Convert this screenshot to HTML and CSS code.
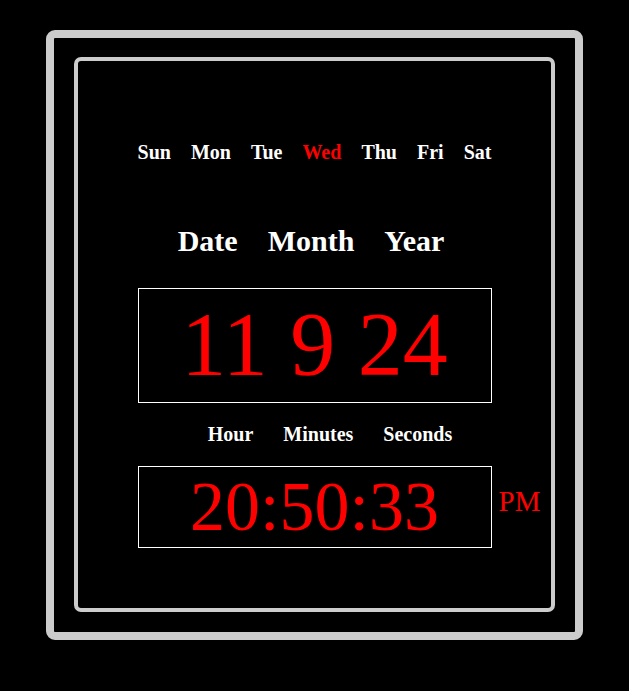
FILE: index.html
```html
<!DOCTYPE html>
<html>
<head>
<meta charset="utf-8">
<link rel="stylesheet" href="styles.css">
</head>
<body>
<div class="outer">
  <div class="inner">
    <div class="days">
      <span>Sun</span><span>Mon</span><span>Tue</span><span class="today">Wed</span><span>Thu</span><span>Fri</span><span>Sat</span>
    </div>
    <div class="date-labels">
      <span>Date</span><span>Month</span><span>Year</span>
    </div>
    <div class="date-box">11 9 24</div>
    <div class="time-labels">
      <span>Hour</span><span>Minutes</span><span>Seconds</span>
    </div>
    <div class="time-row">
      <div class="time-box">20:50:33</div>
      <div class="ampm">PM</div>
    </div>
  </div>
</div>
</body>
</html>
```

FILE: styles.css
```css
html, body {
  margin: 0;
  padding: 0;
  background: #000;
}
body {
  font-family: "Liberation Serif", "Times New Roman", serif;
  color: #fff;
  padding-top: 30px;
}
.outer {
  box-sizing: border-box;
  width: 537px;
  height: 610px;
  margin: 0 auto;
  border: 8px solid #cccccc;
  border-radius: 9px;
  padding: 19px 20px 20px 20px;
}
.inner {
  box-sizing: border-box;
  height: 555px;
  border: 4px solid #cccccc;
  border-radius: 7px;
  display: flex;
  flex-direction: column;
  align-items: center;
}
.days {
  margin-top: 80px;
  display: flex;
  gap: 20px;
  font-size: 20px;
  font-weight: bold;
  line-height: 23px;
}
.today {
  color: #ff0000;
}
.date-labels {
  margin-top: 60px;
  display: flex;
  gap: 30px;
  font-size: 30px;
  font-weight: bold;
  line-height: 34px;
  margin-left: -7px;
}
.date-box {
  margin-top: 30px;
  box-sizing: border-box;
  width: 354px;
  height: 115px;
  border: 1px solid #fff;
  color: #ff0000;
  font-size: 90px;
  line-height: 112px;
  text-align: center;
}
.time-labels {
  margin-top: 20px;
  display: flex;
  gap: 30px;
  font-size: 20px;
  font-weight: bold;
  line-height: 23px;
  margin-left: 31px;
}
.time-row {
  margin-top: 20px;
  width: 100%;
  display: grid;
  grid-template-columns: 1fr 354px 1fr;
  align-items: center;
}
.time-box {
  grid-column: 2;
  box-sizing: border-box;
  height: 82px;
  border: 1px solid #fff;
  color: #ff0000;
  font-size: 70px;
  line-height: 80px;
  text-align: center;
}
.ampm {
  grid-column: 3;
  color: #ff0000;
  font-size: 29px;
  padding-left: 7px;
  margin-top: -12px;
}
```
